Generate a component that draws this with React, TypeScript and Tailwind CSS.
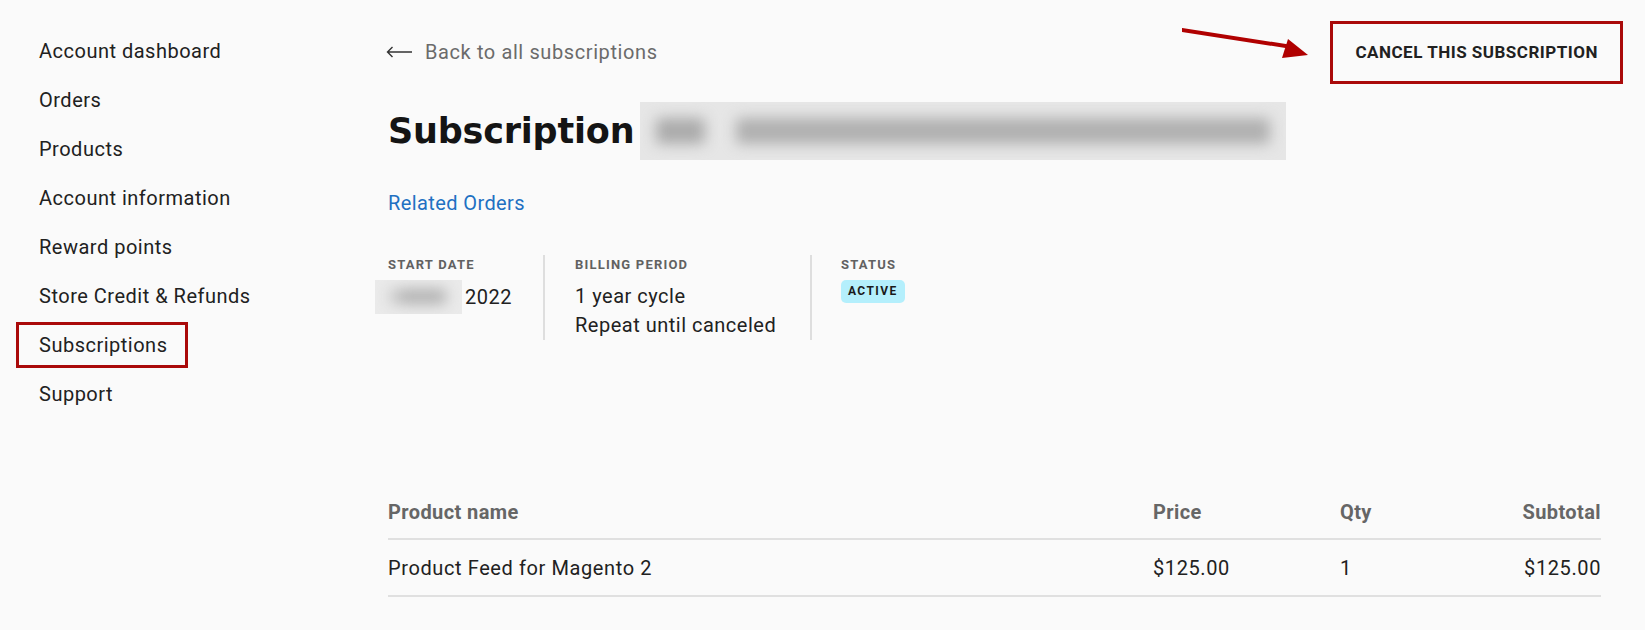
const nav = [
  "Account dashboard",
  "Orders",
  "Products",
  "Account information",
  "Reward points",
  "Store Credit & Refunds",
  "Subscriptions",
  "Support",
];

const roboto = { fontFamily: "Roboto, 'Liberation Sans', sans-serif" };

function Sidebar() {
  return (
    <aside className="w-[388px] shrink-0 pl-[39px] pt-[27px]">
      <ul className="flex flex-col">
        {nav.map((label) => (
          <li key={label} className="h-[48.9px] flex items-center">
            {label === "Subscriptions" ? (
              <a
                href="#"
                className="-ml-[23px] h-[46px] flex items-center border-[3px] border-[#aa0a0a] pl-[20px] pr-[18px] text-[20px] tracking-[0.5px] text-[#212121]"
              >
                {label}
              </a>
            ) : (
              <a href="#" className="text-[20px] tracking-[0.5px] text-[#212121]">
                {label}
              </a>
            )}
          </li>
        ))}
      </ul>
    </aside>
  );
}

function Blur({ className }: { className: string }) {
  return (
    <div className={`overflow-hidden ${className}`}>
      <div className="w-full h-full flex items-center px-4 blur-[7px]">
        <div className="w-[8%] h-[45%] bg-[#ababab] rounded" />
        <div className="w-[5%]" />
        <div className="flex-1 h-[45%] bg-[#b0b0b0] rounded" />
      </div>
    </div>
  );
}

function Arrow() {
  return (
    <svg
      className="absolute left-[794px] top-[25px]"
      width="140"
      height="40"
      viewBox="0 0 140 40"
      aria-hidden
    >
      <path d="M0 5 L110 22" stroke="#b00000" strokeWidth="4" strokeLinecap="round" />
      <path d="M126 30 L100 33 L106 14 Z" fill="#b00000" />
    </svg>
  );
}

export default function App() {
  return (
    <div className="flex w-full h-[630px] bg-[#fafafa] text-[#212121] overflow-hidden" style={roboto}>
      <Sidebar />

      <main className="relative flex-1 pr-[44px]">
        <Arrow />

        {/* top row */}
        <div className="flex items-start justify-between pt-[21px]">
          <a href="#" className="mt-[16px] -ml-[2px] flex items-center gap-[12px] text-[20px] tracking-[0.6px] text-[#6b6b6b]">
            <svg width="27" height="12" viewBox="0 0 27 12" fill="none" aria-hidden>
              <path d="M26 6H1.5M6.5 1L1.5 6l5 5" stroke="#333" strokeWidth="1.4" />
            </svg>
            Back to all subscriptions
          </a>
          <button className="-mr-[22px] h-[63px] border-[3px] border-[#aa0a0a] px-[22px] text-[17px] font-bold tracking-[0.5px] text-[#212121]">
            CANCEL THIS SUBSCRIPTION
          </button>
        </div>

        {/* heading */}
        <div className="flex items-center mt-[18px] h-[58px]">
          <h1
            className="text-[35px] font-bold tracking-[-0.2px] text-[#141414]"
            style={{ fontFamily: "'DejaVu Sans', 'Open Sans', sans-serif" }}
          >
            Subscription
          </h1>
          <Blur className="ml-[6px] w-[646px] h-[58px] bg-[#e6e6e6]" />
        </div>

        <a href="#" className="block mt-[28px] text-[20px] tracking-[0.4px] text-[#2170c2]">
          Related Orders
        </a>

        {/* info */}
        <div className="flex mt-[37px] h-[85px]">
          <div className="w-[155px]">
            <div className="text-[13px] font-bold tracking-[1.2px] text-[#616161]">START DATE</div>
            <div className="flex items-center mt-[5px] -ml-[13px]">
              <Blur className="w-[87px] h-[34px] bg-[#eaeaea]" />
              <span className="ml-[3px] text-[20px] tracking-[0.5px]">2022</span>
            </div>
          </div>
          <div className="w-[267px] border-l-2 border-[#dedede] pl-[30px]">
            <div className="text-[13px] font-bold tracking-[1.2px] text-[#616161]">BILLING PERIOD</div>
            <div className="mt-[7px] text-[20px] tracking-[0.5px] leading-[29px]">
              <div>1 year cycle</div>
              <div>Repeat until canceled</div>
            </div>
          </div>
          <div className="border-l-2 border-[#dedede] pl-[29px]">
            <div className="text-[13px] font-bold tracking-[1.2px] text-[#616161]">STATUS</div>
            <span className="inline-flex items-center mt-[5px] h-[23px] px-[7px] rounded-[5px] bg-[#b4effc] text-[12px] font-bold tracking-[1.4px] text-[#1a1a1a]">
              ACTIVE
            </span>
          </div>
        </div>

        {/* table */}
        <div className="mt-[157px]">
          <div className="grid grid-cols-[765px_187px_1fr_auto] items-center h-[27px] text-[20px] font-bold tracking-[0.4px] text-[#666]">
            <div>Product name</div>
            <div>Price</div>
            <div>Qty</div>
            <div className="text-right">Subtotal</div>
          </div>
          <div className="mt-[14px] border-t-2 border-[#e0e0e0]" />
          <div className="grid grid-cols-[765px_187px_1fr_auto] items-center h-[57px] text-[20px] tracking-[0.6px] border-b-2 border-[#e0e0e0]">
            <div>Product Feed for Magento 2</div>
            <div>$125.00</div>
            <div>1</div>
            <div className="text-right">$125.00</div>
          </div>
        </div>
      </main>
    </div>
  );
}
